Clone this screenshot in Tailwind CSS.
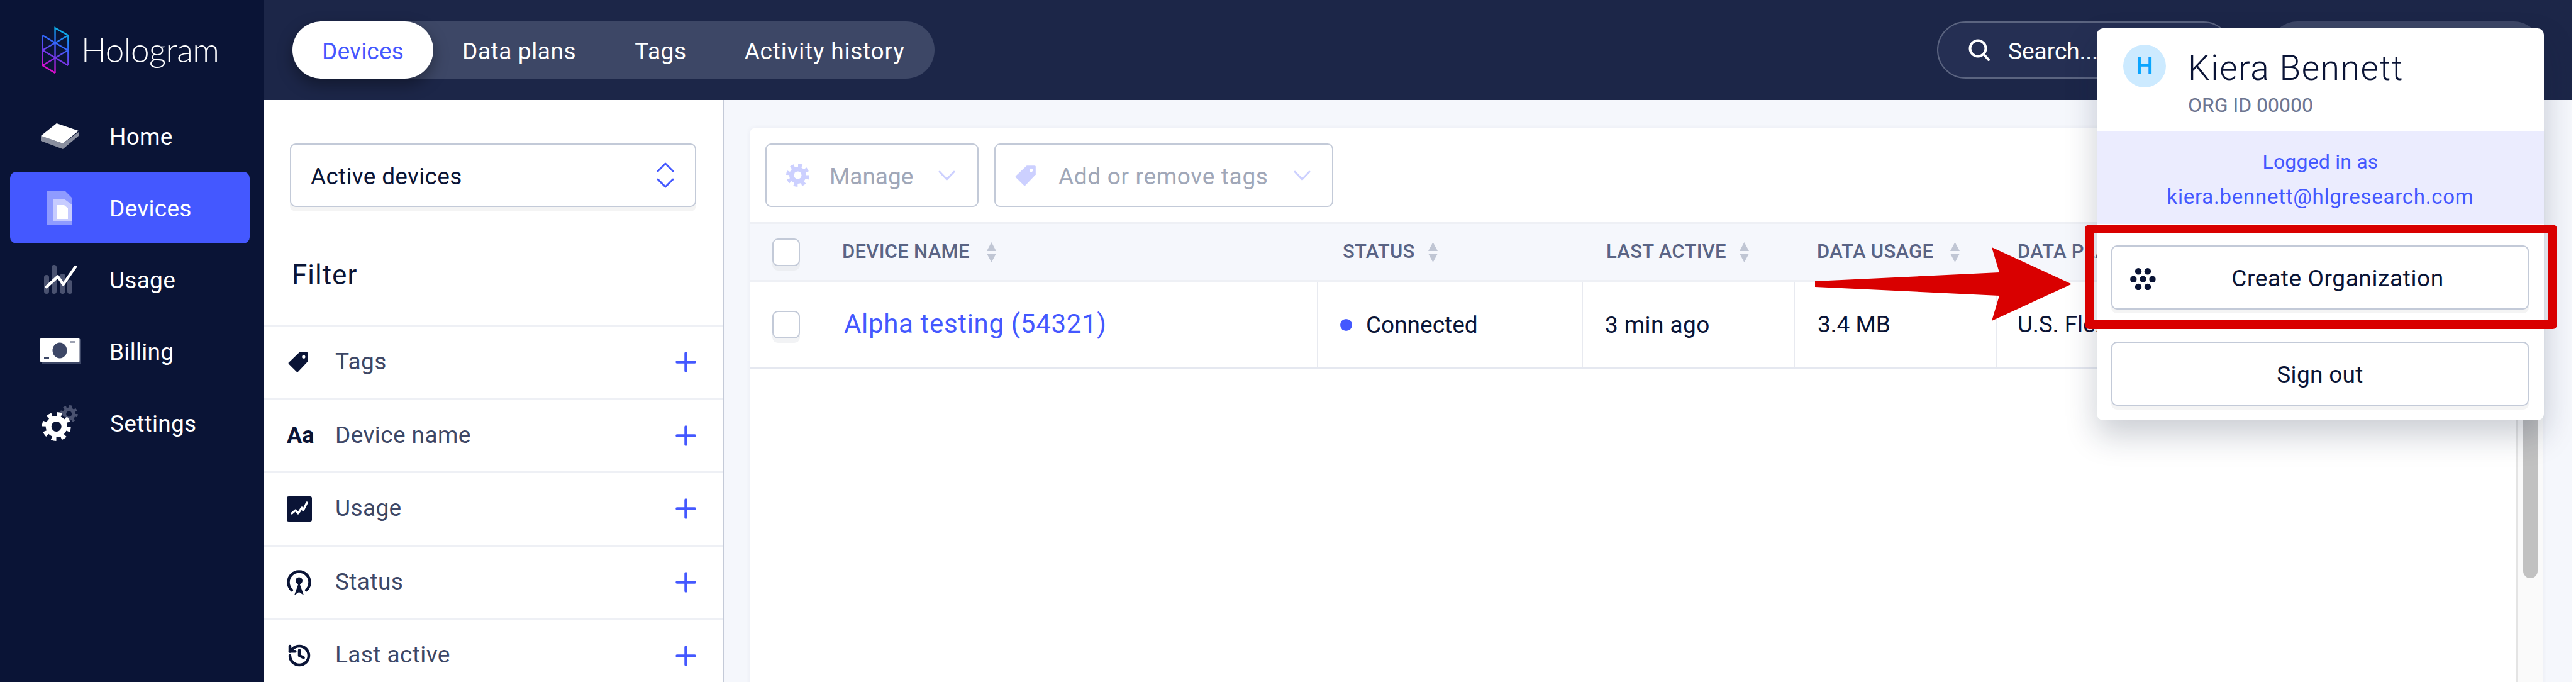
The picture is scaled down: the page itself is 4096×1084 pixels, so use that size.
<!DOCTYPE html>
<html lang="en">
<head>
    <meta charset="UTF-8">
    <title>Hologram Devices</title>
    <script src="https://cdn.jsdelivr.net/npm/@tailwindcss/browser@4"></script>
</head>
<body class="bg-white font-['Roboto',sans-serif]">
<div class="relative flex w-[4089px] h-[1084px] overflow-hidden bg-[#f5f7fc]">

    <!-- Sidebar -->
    <aside class="w-[419px] shrink-0 bg-[#0a1436] text-white">
        <div class="h-[159px] flex items-center pl-[65px]">
            <svg class="w-[46px] h-[76px]" viewBox="93 85 192 322" fill="none" stroke="url(#logoGrad)" stroke-width="10">
                <defs>
                    <linearGradient id="logoGrad" gradientUnits="userSpaceOnUse" x1="110" y1="390" x2="270" y2="100">
                        <stop offset="0" stop-color="#ff00c8"/>
                        <stop offset="0.35" stop-color="#7a35e8"/>
                        <stop offset="0.65" stop-color="#2f6bff"/>
                        <stop offset="1" stop-color="#00c8e0"/>
                    </linearGradient>
                </defs>
                <path d="M187 398V95L275 145V348M103 145V348L187 398M103 145L275 247M275 145L103 245L275 348M275 245L103 348"/>
            </svg>
            <span class="ml-[18px] pb-[2px] text-[53px] leading-none font-['Lato',sans-serif] font-light tracking-[-0.5px]">Hologram</span>
        </div>
        <nav class="text-[37px] tracking-[0.3px]">
            <a class="h-[114px] flex items-center pl-[65px]">
                <svg class="w-[60px] h-[41px]" viewBox="0 0 60 41">
                    <polygon points="0,28 35,41 60,20 60,14 35,32 0,20" fill="#8a8f9f"/>
                    <polygon points="0,20 25,0 60,12 35,32" fill="#fff"/>
                </svg>
                <span class="ml-[49px] pt-[4px]">Home</span>
            </a>
            <a class="h-[114px] ml-[16px] w-[381px] flex items-center pl-[59px] bg-[#4458ff] rounded-[10px]">
                <svg class="w-[40px] h-[54px]" viewBox="0 0 40 54">
                    <polygon points="0,0 28,0 40,12 40,54 0,54" fill="#8f9bff"/>
                    <polygon points="10,14 28,14 39,22 39,49 10,49" fill="#c7ccff"/>
                    <polygon points="16,23 27,23 33,28 33,45 16,45" fill="#fff"/>
                </svg>
                <span class="ml-[59px] pt-[4px]">Devices</span>
            </a>
            <a class="h-[114px] flex items-center pl-[70px]">
                <svg class="w-[52px] h-[46px]" viewBox="0 0 52 46" fill="none">
                    <g stroke="#4a5270" stroke-width="8" stroke-linecap="round">
                        <path d="M4 20V42M16 4V42M29.5 18V42M41 28V42"/>
                    </g>
                    <path d="M4 35L22 18.5L30.6 31L50 3" stroke="#fff" stroke-width="4.5" stroke-linecap="round" stroke-linejoin="round"/>
                </svg>
                <span class="ml-[52px] pt-[4px]">Usage</span>
            </a>
            <a class="h-[114px] flex items-center pl-[64px]">
                <svg class="w-[65px] h-[42px]" viewBox="0 0 65 42">
                    <rect x="2" y="2" width="63" height="40" rx="2" fill="#3d4766"/>
                    <rect width="62.5" height="39" rx="2" fill="#fff"/>
                    <ellipse cx="31" cy="20" rx="11.5" ry="12.5" fill="#3d4766"/>
                    <path d="M48 6.5H56M6 32H14" stroke="#3d4766" stroke-width="2"/>
                </svg>
                <span class="ml-[45px] pt-[4px]">Billing</span>
            </a>
            <a class="h-[114px] flex items-center pl-[67px]">
                <svg class="w-[57px] h-[57px]" viewBox="0 0 57 57" fill="none">
                    <g transform="translate(42.7 14)">
                        <circle r="10.5" fill="#4a5270"/>
                        <circle r="11" stroke="#4a5270" stroke-width="6" stroke-dasharray="4.32 4.32"/>
                        <circle r="4.5" fill="#0a1436"/>
                    </g>
                    <g transform="translate(22.7 34)">
                        <circle r="20" fill="#0a1436"/>
                        <circle r="17" fill="#fff"/>
                        <circle r="18" stroke="#fff" stroke-width="10" stroke-dasharray="7 7.14"/>
                        <circle r="8" fill="#0a1436"/>
                    </g>
                </svg>
                <span class="ml-[51px] pt-[4px]">Settings</span>
            </a>
        </nav>
    </aside>

    <!-- Main column -->
    <div class="flex-1 flex flex-col min-w-0">
        <header class="h-[159px] shrink-0 bg-[#1c2648] flex items-center pl-[46px] pr-[47px]">
            <div class="flex items-center h-[91px] w-[1021px] rounded-full bg-[#3d4766] text-white text-[37px] tracking-[0.6px]">
                <span class="h-full w-[224px] pt-[4px] flex items-center justify-center rounded-full bg-white text-[#4458ff] tracking-[0.2px] shadow-[0_10px_24px_rgba(0,0,0,0.35)]">Devices</span>
                <span class="ml-[46px] pt-[4px]">Data plans</span>
                <span class="ml-[93px] pt-[4px]">Tags</span>
                <span class="ml-[92px] pt-[4px] tracking-[0.8px]">Activity history</span>
            </div>
            <div class="ml-auto flex items-center h-[91px] w-[469px] pl-[48px] rounded-full border-2 border-[#5b6480] bg-[#252f53] text-white text-[37px]">
                <svg class="w-[35px] h-[35px]" viewBox="0 0 35 35" fill="none" stroke="#fff" stroke-width="4" stroke-linecap="round">
                    <circle cx="15" cy="15" r="12.5"/>
                    <path d="M24 24L32 33"/>
                </svg>
                <span class="ml-[28px] pt-[4px]">Search...</span>
            </div>
            <div class="ml-[59px] h-[91px] w-[434px] rounded-full bg-[#3d4766]"></div>
        </header>

        <div class="flex-1 flex min-h-0">
            <!-- Filter panel -->
            <section class="w-[733px] shrink-0 bg-white border-r-[3px] border-[#c4cad8]">
                <div class="pt-[69px] pl-[42px]">
                    <div class="w-[646px] h-[101px] flex items-center justify-between pl-[31px] pr-[33px] rounded-[9px] border-2 border-[#c3cad8] shadow-[0_7px_0_#f4f4f4] text-[37px] text-[#0a1436] tracking-[0.3px]">
                        <span class="pt-[4px]">Active devices</span>
                        <svg class="w-[28px] h-[42px]" viewBox="0 0 28 42" fill="none" stroke="#4458ff" stroke-width="3" stroke-linecap="round" stroke-linejoin="round">
                            <path d="M2 14L14 2L26 14M2 27L14 39L26 27"/>
                        </svg>
                    </div>
                </div>
                <h2 class="h-[187px] pt-[28px] flex items-center pl-[45px] text-[44px] text-[#0a1436] tracking-[1px]">Filter</h2>
                <ul class="text-[37px] text-[#3d4766] tracking-[0.4px]">
                    <li class="h-[116.6px] flex items-center pl-[37px] pr-[42px] border-t-[3px] border-[#eef0f5]">
                        <span class="w-[77px] shrink-0">
                            <svg class="w-[37px] h-[37px]" viewBox="0 0 24 24" fill="#0a1436">
                                <path d="M13 2H21A1 1 0 0 1 22 3V11L11.6 22A1 1 0 0 1 10.2 22L2 13.9A1 1 0 0 1 2 12.5Z"/>
                                <circle cx="17.4" cy="6.600" r="1.7" fill="#fff"/>
                            </svg>
                        </span>
                        <span class="pb-[2px]">Tags</span>
                        <svg class="ml-auto w-[33px] h-[33px]" viewBox="0 0 33 33" stroke="#4458ff" stroke-width="4.5" stroke-linecap="round"><path d="M16.5 2.5V30.5M2.5 16.5H30.5"/></svg>
                    </li>
                    <li class="h-[116.6px] flex items-center pl-[37px] pr-[42px] border-t-[3px] border-[#eef0f5]">
                        <span class="w-[77px] shrink-0 text-[36px] font-bold text-[#0a1436] tracking-normal">Aa</span>
                        <span class="pb-[2px]">Device name</span>
                        <svg class="ml-auto w-[33px] h-[33px]" viewBox="0 0 33 33" stroke="#4458ff" stroke-width="4.5" stroke-linecap="round"><path d="M16.5 2.5V30.5M2.5 16.5H30.5"/></svg>
                    </li>
                    <li class="h-[116.6px] flex items-center pl-[37px] pr-[42px] border-t-[3px] border-[#eef0f5]">
                        <span class="w-[77px] shrink-0">
                            <svg class="w-[40px] h-[40px]" viewBox="0 0 40 40" fill="none">
                                <rect width="40" height="40" rx="3" fill="#0a1436"/>
                                <path d="M8 27L14 22L18 27L24 18L26 22L32 10" stroke="#fff" stroke-width="3.5" stroke-linecap="round" stroke-linejoin="round"/>
                            </svg>
                        </span>
                        <span class="pb-[2px]">Usage</span>
                        <svg class="ml-auto w-[33px] h-[33px]" viewBox="0 0 33 33" stroke="#4458ff" stroke-width="4.5" stroke-linecap="round"><path d="M16.5 2.5V30.5M2.5 16.5H30.5"/></svg>
                    </li>
                    <li class="h-[116.6px] flex items-center pl-[37px] pr-[42px] border-t-[3px] border-[#eef0f5]">
                        <span class="w-[77px] shrink-0">
                            <svg class="w-[39px] h-[41px]" viewBox="0 0 39 41" fill="none">
                                <path d="M8 33A17 17 0 1 1 31 33" stroke="#0a1436" stroke-width="4.5" stroke-linecap="round"/>
                                <circle cx="19.5" cy="18" r="5.5" fill="#0a1436"/>
                                <path d="M19.5 20L27 41L19.5 36L12 41Z" fill="#0a1436"/>
                            </svg>
                        </span>
                        <span class="pb-[2px]">Status</span>
                        <svg class="ml-auto w-[33px] h-[33px]" viewBox="0 0 33 33" stroke="#4458ff" stroke-width="4.5" stroke-linecap="round"><path d="M16.5 2.5V30.5M2.5 16.5H30.5"/></svg>
                    </li>
                    <li class="h-[116.6px] flex items-center pl-[37px] pr-[42px] border-t-[3px] border-[#eef0f5]">
                        <span class="w-[77px] shrink-0">
                            <svg class="w-[40px] h-[40px]" viewBox="0 0 24 24" fill="none" stroke="#0a1436" stroke-width="2.7" stroke-linecap="round" stroke-linejoin="round">
                                <path d="M3 12a9 9 0 1 0 9-9 9.75 9.75 0 0 0-6.74 2.74L3 8"/>
                                <path d="M3 3v5h5"/>
                                <path d="M12 7v5l4 2"/>
                            </svg>
                        </span>
                        <span class="pb-[2px]">Last active</span>
                        <svg class="ml-auto w-[33px] h-[33px]" viewBox="0 0 33 33" stroke="#4458ff" stroke-width="4.5" stroke-linecap="round"><path d="M16.5 2.5V30.5M2.5 16.5H30.5"/></svg>
                    </li>
                </ul>
            </section>

            <!-- Device list -->
            <main class="flex-1 min-w-0 pt-[45px] pl-[41px] pr-[46px]">
                <div class="h-[900px] flex bg-white rounded-t-[6px] shadow-[0_0_8px_rgba(30,40,80,0.06)]">
                    <div class="flex-1 min-w-0">
                        <div class="h-[149px] flex gap-[25px] pt-[24px] pl-[24px] text-[37px] text-[#a0a7b8]">
                            <div class="w-[339px] h-[101px] flex items-center pl-[31px] rounded-[9px] border-2 border-[#c3cad8]">
                                <svg class="w-[37px] h-[37px]" viewBox="-18.5 -18.5 37 37" fill="none">
                                    <circle r="13.5" fill="#ccd0ff"/>
                                    <circle r="14.5" stroke="#ccd0ff" stroke-width="8" stroke-dasharray="5.7 5.7"/>
                                    <circle r="6" fill="#fff"/>
                                </svg>
                                <span class="ml-[32px] pt-[4px]">Manage</span>
                                <svg class="ml-[40px] w-[27px] h-[16px]" viewBox="0 0 27 16" fill="none" stroke="#ccd0ff" stroke-width="3" stroke-linecap="round" stroke-linejoin="round"><path d="M2 2L13.5 14L25 2"/></svg>
                            </div>
                            <div class="w-[539px] h-[101px] flex items-center pl-[29px] rounded-[9px] border-2 border-[#c3cad8]">
                                <svg class="w-[38px] h-[38px]" viewBox="0 0 24 24" fill="#ccd0ff">
                                    <path d="M13 2H21A1 1 0 0 1 22 3V11L11.6 22A1 1 0 0 1 10.2 22L2 13.9A1 1 0 0 1 2 12.5Z"/>
                                    <circle cx="17.4" cy="6.600" r="1.7" fill="#fff"/>
                                </svg>
                                <span class="ml-[33px] pt-[4px] tracking-[0.67px]">Add or remove tags</span>
                                <svg class="ml-[40px] w-[27px] h-[16px]" viewBox="0 0 27 16" fill="none" stroke="#ccd0ff" stroke-width="3" stroke-linecap="round" stroke-linejoin="round"><path d="M2 2L13.5 14L25 2"/></svg>
                            </div>
                        </div>

                        <div class="h-[95px] flex items-center bg-[#f5f7fc] border-y-[3px] border-[#eef0f5] text-[31px] font-medium text-[#5a6485] tracking-[0.3px]">
                            <div class="w-[901px] flex items-center pl-[35px]">
                                <span class="w-[44px] h-[44px] rounded-[9px] bg-white border-2 border-[#c3cad8] shadow-[0_7px_0_#eceef2]"></span>
                                <span class="ml-[67px] w-[207px] whitespace-nowrap">DEVICE NAME</span>
                                <svg class="ml-[23px] w-[15px] h-[32px]" viewBox="0 0 15 32" fill="#c0c6d4"><path d="M7.5 0L15 14H0ZM0 18H15L7.5 32Z"/></svg>
                            </div>
                            <div class="w-[421px] flex items-center pl-[41px]">
                                <span class="w-[116px] whitespace-nowrap">STATUS</span>
                                <svg class="ml-[20px] w-[15px] h-[32px]" viewBox="0 0 15 32" fill="#c0c6d4"><path d="M7.5 0L15 14H0ZM0 18H15L7.5 32Z"/></svg>
                            </div>
                            <div class="w-[337px] flex items-center pl-[39px]">
                                <span class="w-[194px] whitespace-nowrap">LAST ACTIVE</span>
                                <svg class="ml-[18px] w-[15px] h-[32px]" viewBox="0 0 15 32" fill="#c0c6d4"><path d="M7.5 0L15 14H0ZM0 18H15L7.5 32Z"/></svg>
                            </div>
                            <div class="w-[321px] flex items-center pl-[37px]">
                                <span class="w-[189px] whitespace-nowrap">DATA USAGE</span>
                                <svg class="ml-[23px] w-[15px] h-[32px]" viewBox="0 0 15 32" fill="#c0c6d4"><path d="M7.5 0L15 14H0ZM0 18H15L7.5 32Z"/></svg>
                            </div>
                            <div class="pl-[35px]">DATA PLAN</div>
                        </div>

                        <div class="h-[139px] flex border-b-[3px] border-[#e5e8f0] text-[37px] text-[#0a1436]">
                            <div class="w-[901px] flex items-center pl-[35px]">
                                <span class="w-[44px] h-[44px] rounded-[9px] bg-white border-2 border-[#c3cad8] shadow-[0_7px_0_#f2f3f5]"></span>
                                <span class="ml-[70px] pb-[4px] text-[42px] text-[#4458ff] tracking-[0.67px]">Alpha testing (54321)</span>
                            </div>
                            <div class="w-[421px] flex items-center pl-[35px] border-l-2 border-[#e8eaf0]">
                                <span class="w-[19px] h-[19px] rounded-full bg-[#4458ff]"></span>
                                <span class="ml-[22px] pt-[2px]">Connected</span>
                            </div>
                            <div class="w-[337px] flex items-center pl-[35px] pt-[2px] border-l-2 border-[#e8eaf0] tracking-[0.4px]">3 min ago</div>
                            <div class="w-[321px] flex items-center pl-[36px] border-l-2 border-[#e8eaf0]">3.4 MB</div>
                            <div class="flex items-center pl-[33px] border-l-2 border-[#e8eaf0]">U.S. Flexible</div>
                        </div>
                    </div>
                    <!-- Scrollbar -->
                    <div class="w-[42px] shrink-0 bg-[#fafafa] border-l-2 border-[#e4e4e4] pl-[9px] pt-[205px]">
                        <div class="w-[23px] h-[510px] rounded-b-full bg-[#c1c1c1]"></div>
                    </div>
                </div>
            </main>
        </div>
    </div>

    <!-- Account popup -->
    <div class="absolute left-[3334px] top-[45px] w-[711px] h-[623px] bg-white rounded-[10px] shadow-[0_24px_50px_rgba(20,30,60,0.22)]">
        <div class="h-[163px] flex pl-[42px] pt-[26px]">
            <span class="w-[68px] h-[68px] rounded-full bg-[#cceaff] text-[#0aa5ff] text-[38px] font-medium flex items-center justify-center">H</span>
            <div class="ml-[35px]">
                <div class="mt-[2px] text-[55px] leading-[70px] font-light text-[#0a1436] tracking-[1.6px]">Kiera Bennett</div>
                <div class="mt-[4px] text-[32px] leading-[40px] text-[#6d7691]">ORG ID 00000</div>
            </div>
        </div>
        <div class="h-[148px] bg-[#ebecfe] text-center text-[#4458ff] pt-[21px]">
            <div class="leading-[56px] text-[32px] tracking-[0.2px]">Logged in as</div>
            <div class="leading-[56px] text-[33px] tracking-[0.75px]">kiera.bennett@hlgresearch.com</div>
        </div>
        <div class="pl-[23px] pr-[24px]">
            <div class="mt-[34px] h-[102px] relative flex items-center justify-center rounded-[9px] border-2 border-[#c3cad8] shadow-[0_6px_0_#f4f4f4] text-[37px] text-[#0a1436] tracking-[0.6px]">
                <svg class="absolute left-[28px] top-[34px] w-[41px] h-[35px]" viewBox="0 0 41 35" fill="#0a1436">
                    <circle cx="13" cy="5.300" r="5.200"/><circle cx="28" cy="5.300" r="5.200"/>
                    <circle cx="5.300" cy="17.700" r="5.200"/><circle cx="20.500" cy="17.700" r="5.200"/><circle cx="35.500" cy="17.700" r="5.200"/>
                    <circle cx="13" cy="30" r="5.200"/><circle cx="28" cy="30" r="5.200"/>
                </svg>
                <span class="ml-[56px] pt-[4px]">Create Organization</span>
            </div>
            <div class="mt-[51px] h-[102px] flex items-center justify-center rounded-[9px] border-2 border-[#c3cad8] shadow-[0_6px_0_#f4f4f4] text-[37px] text-[#0a1436] tracking-[0.3px]"><span class="pt-[4px]">Sign out</span></div>
        </div>
    </div>

    <!-- Annotation -->
    <div class="absolute left-[3315px] top-[357px] w-[751px] h-[166px] rounded-[7px] border-[14px] border-[#d90000]"></div>
    <svg class="absolute left-[2880px] top-[385px] w-[420px] h-[130px]" viewBox="0 0 420 130">
        <polygon points="6,62 299,48 287,8 414,66.500 287,125 299,85 6,71" fill="#d90000"/>
    </svg>
</div>
</body>
</html>
